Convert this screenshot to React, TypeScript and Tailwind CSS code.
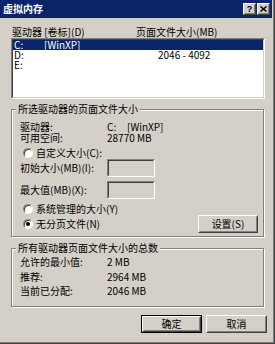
import React from "react";

const F = "font-['Noto_Sans_CJK_SC','Noto_Sans',sans-serif]";

function Radio({ checked }: { checked?: boolean }) {
  return (
    <div className="w-[10px] h-[10px] shrink-0 rounded-full border border-[#808080] border-b-white border-r-white bg-white shadow-[inset_1px_1px_0_#404040] flex items-center justify-center">
      {checked && <div className="w-[4px] h-[4px] rounded-full bg-black" />}
    </div>
  );
}

function Btn({
  children,
  className,
  def,
}: {
  children: React.ReactNode;
  className?: string;
  def?: boolean;
}) {
  const inner = (
    <div className="h-full border border-t-white border-l-white border-r-[#404040] border-b-[#404040] bg-[#d4d0c8]">
      <div className="h-full border border-transparent border-r-[#808080] border-b-[#808080] flex items-center justify-center text-[10px] leading-[10px]">
        {children}
      </div>
    </div>
  );
  if (def)
    return <div className={`border border-black ${className ?? ""}`}>{inner}</div>;
  return <div className={className}>{inner}</div>;
}

function Sunken({ className, children }: { className?: string; children?: React.ReactNode }) {
  return (
    <div className={`border border-[#808080] border-b-white border-r-white ${className ?? ""}`}>
      <div className="h-full border border-[#404040] border-b-[#d4d0c8] border-r-[#d4d0c8]">{children}</div>
    </div>
  );
}

function Group({
  legend,
  className,
  children,
}: {
  legend: string;
  className?: string;
  children: React.ReactNode;
}) {
  return (
    <div
      className={`relative w-[253px] border border-[#808080] shadow-[1px_1px_0_#fff,inset_1px_1px_0_#fff] ${className ?? ""}`}
    >
      <div className="absolute left-[4px] -top-[6px] px-[2px] bg-[#d4d0c8] text-[10px] leading-[10px] whitespace-nowrap">
        {legend}
      </div>
      {children}
    </div>
  );
}

export default function App() {
  return (
    <div className={`w-[275px] h-[344px] bg-[#d4d0c8] text-black ${F}`}>
      <div className="h-full border-r border-b border-[#404040]">
        <div className="h-full border-r border-b border-[#808080] flex flex-col">
          {/* Title bar */}
          <div className="h-[18px] mr-[1px] bg-[#0a246a] flex items-center pl-[3px] shrink-0">
            <span className="text-white font-bold text-[10px] leading-[10px] tracking-[0px]">虚拟内存</span>
            <div className="ml-auto mr-[2px] flex gap-[1px]">
              <Btn className="w-[13px] h-[12px]">
                <span className="font-bold text-[9px] leading-[9px] font-['Liberation_Sans',sans-serif]">?</span>
              </Btn>
              <Btn className="w-[13px] h-[12px]">
                <svg width="7" height="6" viewBox="0 0 7 6">
                  <path d="M0.5 0.5 L6.5 5.5 M6.5 0.5 L0.5 5.5" stroke="black" strokeWidth="1.5" />
                </svg>
              </Btn>
            </div>
          </div>

          <div className="pl-[11px] flex flex-col">
            {/* header */}
            <div className="mt-[9px] h-[10px] grid grid-cols-[124px_1fr] pl-[1px] text-[10px] leading-[10px] whitespace-nowrap">
              <span>驱动器 [卷标](D)</span>
              <span>页面文件大小(MB)</span>
            </div>

            {/* list */}
            <Sunken className="mt-[1px] w-[254px] h-[61px]">
              <div className="h-full bg-white text-[10px] leading-[10px]">
                <div className="h-[10px] bg-[#0a246a] text-white grid grid-cols-[30px_114px_1fr] pl-[1px]">
                  <span>C:</span>
                  <span>[WinXP]</span>
                  <span></span>
                </div>
                <div className="h-[10px] grid grid-cols-[30px_114px_1fr] pl-[1px]">
                  <span>D:</span>
                  <span></span>
                  <span>2046 - 4092</span>
                </div>
                <div className="h-[10px] grid grid-cols-[30px_114px_1fr] pl-[1px]">
                  <span>E:</span>
                  <span></span>
                  <span></span>
                </div>
              </div>
            </Sunken>

            {/* group 1 */}
            <Group legend="所选驱动器的页面文件大小" className="mt-[10px]">
              <div className="pt-[11px] pl-[8px] pr-[5px] pb-[3px] flex flex-col text-[10px] leading-[10px] whitespace-nowrap">
                <div className="h-[11px] flex items-center">
                  <span className="w-[87px]">驱动器:</span>
                  <span className="w-[20px]">C:</span>
                  <span>[WinXP]</span>
                </div>
                <div className="h-[12px] flex items-center">
                  <span className="w-[87px]">可用空间:</span>
                  <span>28770 MB</span>
                </div>
                <div className="mt-[3px] h-[12px] flex items-center pl-[3px]">
                  <Radio />
                  <span className="ml-[3px]">自定义大小(C):</span>
                </div>
                <div className="h-[18px] flex items-center">
                  <span className="w-[87px]">初始大小(MB)(I):</span>
                  <Sunken className="w-[48px] h-[18px]">
                    <div className="h-full bg-[#d4d0c8]" />
                  </Sunken>
                </div>
                <div className="mt-[4px] h-[18px] flex items-center">
                  <span className="w-[87px]">最大值(MB)(X):</span>
                  <Sunken className="w-[48px] h-[18px]">
                    <div className="h-full bg-[#d4d0c8]" />
                  </Sunken>
                </div>
                <div className="mt-[4px] h-[12px] flex items-center pl-[3px]">
                  <Radio />
                  <span className="ml-[3px]">系统管理的大小(Y)</span>
                </div>
                <div className="h-[18px] flex items-center pl-[3px]">
                  <Radio checked />
                  <span className="ml-[3px]">无分页文件(N)</span>
                  <Btn className="ml-auto w-[60px] h-[18px]">设置(S)</Btn>
                </div>
              </div>
            </Group>

            {/* group 2 */}
            <Group legend="所有驱动器页面文件大小的总数" className="mt-[11px]">
              <div className="pt-[6px] pl-[8px] pb-[8px] flex flex-col text-[10px] leading-[10px] whitespace-nowrap">
                <div className="h-[14px] flex items-center">
                  <span className="w-[87px]">允许的最小值:</span>
                  <span>2 MB</span>
                </div>
                <div className="h-[15px] flex items-center">
                  <span className="w-[87px]">推荐:</span>
                  <span>2964 MB</span>
                </div>
                <div className="h-[14px] flex items-center">
                  <span className="w-[87px]">当前已分配:</span>
                  <span>2046 MB</span>
                </div>
              </div>
            </Group>

            {/* buttons */}
            <div className="mt-[8px] ml-[130px] flex gap-[4px]">
              <Btn def className="w-[61px] h-[18px]">确定</Btn>
              <Btn className="w-[61px] h-[18px]">取消</Btn>
            </div>
          </div>
        </div>
      </div>
    </div>
  );
}
